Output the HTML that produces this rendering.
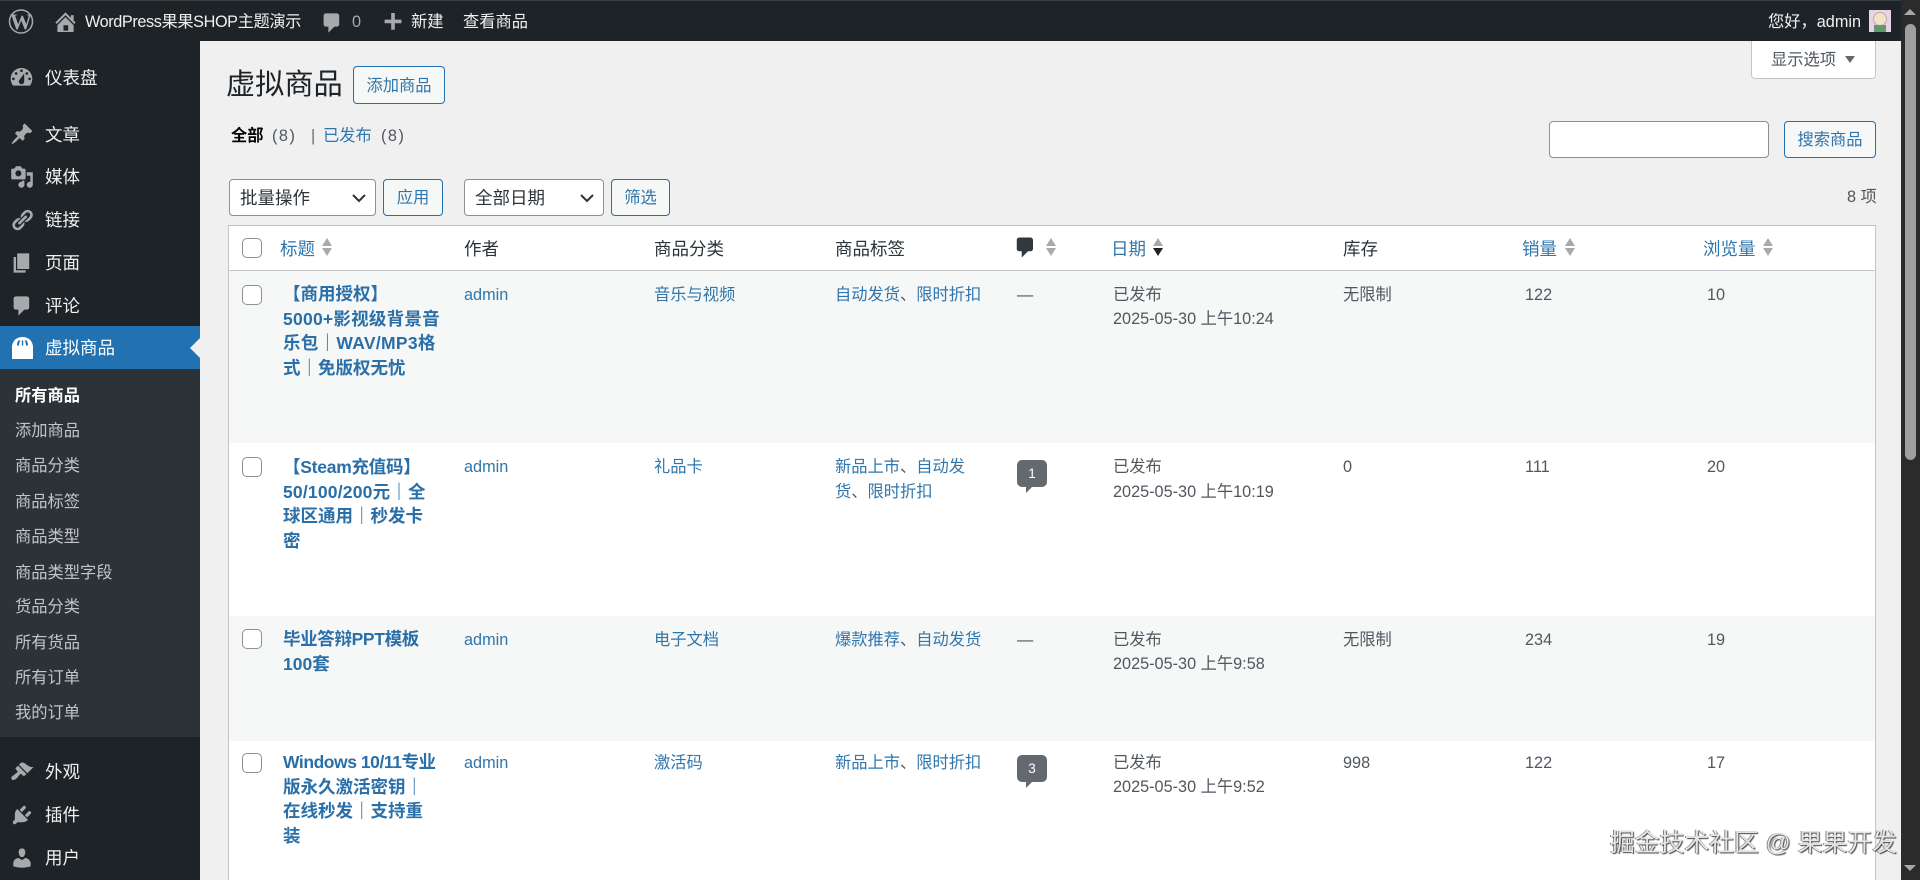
<!DOCTYPE html>
<html lang="zh-CN">
<head>
<meta charset="utf-8">
<title>虚拟商品</title>
<style>
*{box-sizing:border-box;margin:0;padding:0}
html,body{width:1920px;height:880px;overflow:hidden;background:#f0f0f1}
body{position:relative;font-family:"Liberation Sans","Noto Sans CJK SC",sans-serif;font-size:16.25px;color:#50575e}
.a,.t{position:absolute}
.t{white-space:nowrap;line-height:24px;height:24px}
a{color:#2f76ac;text-decoration:none}
.ic{position:absolute;fill:#a7aaad}
#bar{left:0;top:0;width:1901px;height:41px;background:#1d2327;border-top:1px solid #3a3d40}
#side{left:0;top:41px;width:200px;height:839px;background:#1d2327}
#sub{left:0;top:369px;width:200px;height:368px;background:#2c3338}
#cur{left:0;top:326px;width:200px;height:43px;background:#2271b1}
#arrow{left:190px;top:338px;width:0;height:0;border:10px solid transparent;border-right-color:#f0f0f1;border-left:0}
.bt{color:#f0f0f1}
.m{color:#f0f0f1;font-size:17.5px;left:45px;margin-top:1px}
.s{color:#c3c4c7;font-size:16.25px;left:15px;margin-top:1px}
.btn{position:absolute;border:1px solid #2271b1;border-radius:4px;background:#f6f7f7;color:#2f76ac;text-align:center;font-size:16.25px}
.sel{position:absolute;border:1px solid #8c8f94;border-radius:4px;background:#fff;color:#2c3338;font-size:17.5px;padding-left:10px}
.sel svg{position:absolute;top:12px;right:8px}
#table{left:228px;top:225px;width:1648px;height:655px;background:#fff;border:1px solid #c3c4c7;border-bottom:0}
.row{position:absolute;left:229px;width:1646px}
.alt{background:#f6f7f7}
.cb{position:absolute;left:242px;width:20px;height:20px;border:1px solid #8c8f94;border-radius:5px;background:#fff}
.h{font-size:17.5px;color:#2c3338;margin-top:1px}
.sort{position:absolute;top:238px;width:10px;height:18px}
.sort:before,.sort:after{content:"";position:absolute;left:0;width:0;height:0;border-left:5.5px solid transparent;border-right:5.5px solid transparent}
.sort:before{top:0;border-bottom:8px solid #a7aaad}
.sort:after{top:10px;border-top:8px solid #a7aaad}
.sort.on:after{border-top-color:#1d2327}
.title{position:absolute;left:283px;width:170px;font-weight:700;font-size:17.5px;line-height:24.5px;color:#2a6fa8;white-space:nowrap}
.title span{display:block}
.bub{position:absolute;left:1017px;width:30px;height:27px;background:#646970;border-radius:5px;color:#fff;font-size:13.5px;line-height:27px;text-align:center}
.bub:after{content:"";position:absolute;left:9px;top:27px;border-top:6px solid #646970;border-right:6px solid transparent}
</style>
</head>
<body>
<div class="a" id="bar"></div>
<svg class="ic" style="left:8px;top:9px" width="26" height="25" viewBox="0 0 26 25"><circle cx="13" cy="12.500" r="11.500" fill="none" stroke="#a7aaad" stroke-width="1.500"/></svg>
<div class="t" style="left:8px;top:9px;width:26px;text-align:center;font:700 22px/25px 'Liberation Serif',serif;height:25px;color:#a7aaad">W</div>
<svg class="ic" style="left:52px;top:9px" width="27" height="27" viewBox="0 0 20 20"><path fill-rule="evenodd" d="M16 8.500l1.530 1.530-1.060 1.060L10 4.620l-6.470 6.470-1.060-1.060L10 2.500l4 4v-2h2v4zm-6-2.460l6 5.990V17H4v-4.970zM12 16v-4H8.500v4H12z"/></svg>
<div class="t bt" style="left:85px;top:10px;letter-spacing:-.4px">WordPress果果SHOP主题演示</div>
<svg class="ic" style="left:320px;top:11px" width="24" height="24" viewBox="0 0 20 20"><path d="M5 2h9c1.100 0 2 .9 2 2v7c0 1.100-.9 2-2 2h-2l-5 5v-5H5c-1.100 0-2-.9-2-2V4c0-1.100.9-2 2-2z"/></svg>
<div class="t" style="left:352px;top:10px;color:#a7aaad">0</div>
<svg class="ic" style="left:381px;top:10px" width="24" height="24" viewBox="0 0 20 20"><path d="M17 8v3h-5.500v5.500h-3V11H3V8h5.500V2.500h3V8z"/></svg>
<div class="t bt" style="left:411px;top:10px">新建</div>
<div class="t bt" style="left:463px;top:10px">查看商品</div>
<div class="t bt" style="left:1768px;top:10px">您好，admin</div>
<div class="a" style="left:1869px;top:10px;width:22px;height:22px;background:#e8d3e6;overflow:hidden"><div class="a" style="left:4px;top:2px;width:14px;height:14px;border-radius:50%;background:#f0e4c8;border:1px solid #c9a8a8"></div><div class="a" style="left:5px;top:15px;width:12px;height:7px;background:#5f9a6a"></div></div>

<div class="a" style="left:1901px;top:0;width:19px;height:880px;background:#2b2b2b"></div>
<div class="a" style="left:1905px;top:24px;width:11px;height:436px;background:#9f9f9f;border-radius:6px"></div>
<div class="a" style="left:1904px;top:9px;border-left:6px solid transparent;border-right:6px solid transparent;border-bottom:6px solid #a8a8a8"></div>
<div class="a" style="left:1904px;top:865px;border-left:6px solid transparent;border-right:6px solid transparent;border-top:6px solid #a8a8a8"></div>

<div class="a" id="side"></div>
<div class="a" id="cur"></div>
<div class="a" id="sub"></div>
<div class="a" id="arrow"></div>
<svg class="ic" style="left:8px;top:64px" width="27" height="27" viewBox="0 0 20 20"><path fill-rule="evenodd" d="M3.760 16h12.480c1.100-1.370 1.760-3.110 1.760-5 0-4.420-3.580-8-8-8s-8 3.580-8 8c0 1.890.66 3.630 1.760 5zM10 4c.55 0 1 .45 1 1s-.45 1-1 1-1-.45-1-1 .45-1 1-1zM6 6c.55 0 1 .45 1 1s-.45 1-1 1-1-.45-1-1 .45-1 1-1zm8 0c.55 0 1 .45 1 1s-.45 1-1 1-1-.45-1-1 .45-1 1-1zm-5.370 5.550L12 7v6c0 1.100-.9 2-2 2s-2-.9-2-2c0-.57.24-1.080.63-1.450zM4 10c.55 0 1 .45 1 1s-.45 1-1 1-1-.45-1-1 .45-1 1-1zm12 0c.55 0 1 .45 1 1s-.45 1-1 1-1-.45-1-1 .45-1 1-1z"/></svg>
<svg class="ic" style="left:10px;top:122px" width="24" height="24" viewBox="0 0 20 20"><path d="M10.440 3.020l1.820-1.820 6.360 6.350-1.830 1.820c-1.050-.68-2.480-.57-3.410.36l-.75.75c-.92.93-1.040 2.350-.35 3.410l-1.830 1.820-2.410-2.410-2.800 2.790c-.42.42-3.380 2.710-3.800 2.290s1.860-3.390 2.280-3.810l2.790-2.790L4.100 9.360l1.830-1.820c1.050.69 2.480.57 3.400-.36l.75-.75c.93-.92 1.050-2.350.36-3.410z"/></svg>
<svg class="ic" style="left:10px;top:165px" width="24" height="24" viewBox="0 0 20 20"><path fill-rule="evenodd" d="M13 11V4c0-.55-.45-1-1-1h-1.670L9 1H5L3.670 3H2c-.55 0-1 .45-1 1v7c0 .55.45 1 1 1h10c.55 0 1-.45 1-1zM7 4.500c1.380 0 2.500 1.120 2.500 2.500S8.380 9.500 7 9.500 4.500 8.380 4.500 7 5.620 4.500 7 4.500zM14 6h5v10.500c0 1.380-1.120 2.500-2.500 2.500S14 17.880 14 16.500s1.120-2.500 2.500-2.500c.17 0 .34.02.5.05V9h-3V6zm-4 8.050V13h2v3.500c0 1.380-1.120 2.500-2.500 2.500S7 17.880 7 16.500 8.120 14 9.500 14c.17 0 .34.02.5.05z"/></svg>
<svg class="ic" style="left:10px;top:208px" width="24" height="24" viewBox="0 0 20 20"><path d="M17.740 2.760c1.680 1.690 1.680 4.410 0 6.100l-1.530 1.520c-1.120 1.120-2.700 1.490-4.140 1.110l2.620-2.610.76-.77.76-.76c.84-.84.84-2.200 0-3.040-.84-.85-2.200-.85-3.040 0l-.77.76-3.380 3.380c-.37-1.440-.01-3.020 1.110-4.140l1.520-1.530c1.690-1.680 4.420-1.680 6.090 0zM8.590 13.430l5.340-5.340c.42-.42.42-1.100 0-1.520-.44-.43-1.130-.39-1.530 0l-5.330 5.340c-.42.42-.42 1.100 0 1.520.44.43 1.130.39 1.520 0zm-.76 2.290l4.140-4.150c.38 1.440.01 3.020-1.110 4.140l-1.520 1.530c-1.690 1.680-4.410 1.680-6.100 0-1.680-1.680-1.680-4.420 0-6.100l1.530-1.520c1.120-1.120 2.700-1.480 4.140-1.110l-4.140 4.150c-.85.84-.85 2.200 0 3.050.84.84 2.200.84 3.060-.01z"/></svg>
<svg class="ic" style="left:10px;top:251px" width="24" height="24" viewBox="0 0 20 20"><path d="M6 15V2h10v13H6zm-1 1h8v2H3V5h2v11z"/></svg>
<svg class="ic" style="left:10px;top:294px" width="24" height="24" viewBox="0 0 20 20"><path d="M5 2h9c1.100 0 2 .9 2 2v7c0 1.100-.9 2-2 2h-2l-5 5v-5H5c-1.100 0-2-.9-2-2V4c0-1.100.9-2 2-2z"/></svg>
<svg class="ic" style="left:12px;top:337px;fill:#fff" width="21" height="22" viewBox="0 0 21 22"><path fill-rule="evenodd" d="M0 9C1 3 5 0 10.500 0S20 3 21 9v13H0zM6.500 3.500C5.500 4.500 5 6 5 8.500h2C7 6.500 7.500 5 8.500 3.500zM14.500 3.500c1 1 1.500 2.500 1.500 5h-2c0-2-.5-3.500-1.500-5zM9.800 3.500h1.400v5H9.800z"/></svg>
<svg class="ic" style="left:10px;top:760px" width="24" height="24" viewBox="0 0 20 20"><path d="M14.480 11.060L7.410 3.990l1.500-1.500c.5-.56 2.300-.47 3.510.32 1.210.8 1.430 1.280 2.910 2.100 1.180.64 2.450 1.260 4.450.85zm-.71.71L6.700 4.700 4.930 6.470c-.39.39-.39 1.020 0 1.410l1.060 1.060c.39.39.39 1.030 0 1.420-.6.6-1.430 1.110-2.210 1.690-.35.26-.7.53-1.010.84C1.430 13.230.5 15.300 1.560 16.360c.85.85 2.920 0 4.230-1.210.31-.31.58-.66.84-1.010.58-.78 1.090-1.610 1.690-2.210.39-.39 1.030-.39 1.420 0l1.060 1.060c.39.39 1.020.39 1.410 0z"/></svg>
<svg class="ic" style="left:10px;top:803px" width="24" height="24" viewBox="0 0 20 20"><path d="M13.110 4.360L9.870 7.600 8 5.730l3.240-3.240c.35-.34 1.050-.2 1.560.32.52.51.66 1.210.31 1.550zm-8 1.770l.91-1.120 9.010 9.010-1.190.84c-.71.71-2.630 1.160-3.820 1.160H6.140L4.900 17.260c-.59.59-1.540.59-2.120 0-.59-.58-.59-1.530 0-2.120l1.240-1.240v-3.880c0-1.130.4-3.190 1.090-3.890zm7.260 3.970l3.240-3.240c.34-.35 1.040-.21 1.550.31.52.51.66 1.210.31 1.550l-3.240 3.250z"/></svg>
<svg class="ic" style="left:10px;top:846px" width="24" height="24" viewBox="0 0 20 20"><path d="M10 9.250c-2.270 0-2.730-3.440-2.730-3.440C7 4.020 7.820 2 9.970 2c2.160 0 2.980 2.020 2.710 3.810 0 0-.41 3.440-2.680 3.440zm0 2.570L12.720 10c2.390 0 4.520 2.330 4.520 4.530v2.490s-3.650 1.130-7.240 1.130c-3.650 0-7.240-1.130-7.240-1.130v-2.490c0-2.250 1.940-4.480 4.470-4.480z"/></svg>

<div class="t m" style="top:65px">仪表盘</div>
<div class="t m" style="top:122px">文章</div>
<div class="t m" style="top:164px">媒体</div>
<div class="t m" style="top:207px">链接</div>
<div class="t m" style="top:250px">页面</div>
<div class="t m" style="top:293px">评论</div>
<div class="t m" style="top:336px;color:#fff;margin-top:0">虚拟商品</div>
<div class="t s" style="top:383px;color:#fff;font-weight:700">所有商品</div>
<div class="t s" style="top:418px">添加商品</div>
<div class="t s" style="top:453px">商品分类</div>
<div class="t s" style="top:489px">商品标签</div>
<div class="t s" style="top:524px">商品类型</div>
<div class="t s" style="top:560px">商品类型字段</div>
<div class="t s" style="top:594px">货品分类</div>
<div class="t s" style="top:630px">所有货品</div>
<div class="t s" style="top:665px">所有订单</div>
<div class="t s" style="top:700px">我的订单</div>
<div class="t m" style="top:759px">外观</div>
<div class="t m" style="top:802px">插件</div>
<div class="t m" style="top:845px">用户</div>

<div class="a" style="left:1751px;top:41px;width:125px;height:38px;background:#fff;border:1px solid #c3c4c7;border-top:0;border-radius:0 0 4px 4px"></div>
<div class="t" style="left:1771px;top:48px">显示选项</div>
<div class="a" style="left:1845px;top:56px;border-left:5px solid transparent;border-right:5px solid transparent;border-top:7px solid #646970"></div>

<div class="t" style="left:226px;top:67px;height:36px;font-size:29.200px;line-height:36px;color:#1d2327">虚拟商品</div>
<div class="btn" style="left:353px;top:66px;width:92px;height:38px;line-height:38px">添加商品</div>
<div class="t" style="left:231px;top:124px;color:#000;font-weight:700">全部</div>
<div class="t" style="left:272px;top:124px;letter-spacing:1.500px">(8)</div>
<div class="t" style="left:311px;top:124px;color:#646970">|</div>
<div class="t" style="left:323px;top:124px"><a href="#">已发布</a></div>
<div class="t" style="left:381px;top:124px;letter-spacing:1.500px">(8)</div>

<div class="a" style="left:1549px;top:121px;width:220px;height:37px;background:#fff;border:1px solid #8c8f94;border-radius:4px"></div>
<div class="btn" style="left:1784px;top:121px;width:92px;height:37px;line-height:37px">搜索商品</div>

<div class="sel" style="left:229px;top:179px;width:147px;height:37px;line-height:37px">批量操作<svg width="16" height="12" viewBox="0 0 16 12"><path d="M2 3l6 6 6-6" fill="none" stroke="#2c3338" stroke-width="2"/></svg></div>
<div class="btn" style="left:383px;top:179px;width:60px;height:37px;line-height:37px">应用</div>
<div class="sel" style="left:464px;top:179px;width:140px;height:37px;line-height:37px">全部日期<svg width="16" height="12" viewBox="0 0 16 12"><path d="M2 3l6 6 6-6" fill="none" stroke="#2c3338" stroke-width="2"/></svg></div>
<div class="btn" style="left:611px;top:179px;width:59px;height:37px;line-height:37px">筛选</div>
<div class="t" style="left:1847px;top:185px">8 项</div>

<div class="a" id="table"></div>
<div class="a" style="left:229px;top:270px;width:1646px;height:1px;background:#c3c4c7"></div>
<div class="row alt" style="top:271px;height:172px"></div>
<div class="row alt" style="top:616px;height:125px"></div>

<div class="cb" style="top:238px"></div>
<div class="t h" style="left:280px;top:236px"><a href="#">标题</a></div><div class="sort" style="left:322px"></div>
<div class="t h" style="left:464px;top:236px">作者</div>
<div class="t h" style="left:654px;top:236px">商品分类</div>
<div class="t h" style="left:835px;top:236px">商品标签</div>
<svg class="ic" style="left:1013px;top:235px;fill:#32383d" width="25" height="25" viewBox="0 0 20 20"><path d="M5 2h9c1.100 0 2 .9 2 2v7c0 1.100-.9 2-2 2h-2l-5 5v-5H5c-1.100 0-2-.9-2-2V4c0-1.100.9-2 2-2z"/></svg>
<div class="sort" style="left:1046px"></div>
<div class="t h" style="left:1111px;top:236px"><a href="#">日期</a></div><div class="sort on" style="left:1153px"></div>
<div class="t h" style="left:1343px;top:236px">库存</div>
<div class="t h" style="left:1522px;top:236px"><a href="#">销量</a></div><div class="sort" style="left:1565px"></div>
<div class="t h" style="left:1703px;top:236px"><a href="#">浏览量</a></div><div class="sort" style="left:1763px"></div>

<!-- row 1 -->
<div class="cb" style="top:285px"></div>
<div class="title" style="top:282px"><span>【商用授权】</span><span style="letter-spacing:.25px">5000+影视级背景音</span><span style="letter-spacing:.3px">乐包｜WAV/MP3格</span><span>式｜免版权无忧</span></div>
<div class="t" style="left:464px;top:283px"><a href="#">admin</a></div>
<div class="t" style="left:654px;top:283px"><a href="#">音乐与视频</a></div>
<div class="t" style="left:835px;top:283px"><a href="#">自动发货</a>、<a href="#">限时折扣</a></div>
<div class="t" style="left:1017px;top:283px">—</div>
<div class="t" style="left:1113px;top:283px">已发布</div>
<div class="t" style="left:1113px;top:307px">2025-05-30 上午10:24</div>
<div class="t" style="left:1343px;top:283px">无限制</div>
<div class="t" style="left:1525px;top:283px">122</div>
<div class="t" style="left:1707px;top:283px">10</div>

<!-- row 2 -->
<div class="cb" style="top:457px"></div>
<div class="title" style="top:455px"><span style="letter-spacing:-.25px">【Steam充值码】</span><span style="letter-spacing:.2px">50/100/200元｜全</span><span>球区通用｜秒发卡</span><span>密</span></div>
<div class="t" style="left:464px;top:455px"><a href="#">admin</a></div>
<div class="t" style="left:654px;top:455px"><a href="#">礼品卡</a></div>
<div class="t" style="left:835px;top:455px"><a href="#">新品上市</a>、<a href="#">自动发</a></div>
<div class="t" style="left:835px;top:480px"><a href="#">货</a>、<a href="#">限时折扣</a></div>
<div class="bub" style="top:460px">1</div>
<div class="t" style="left:1113px;top:455px">已发布</div>
<div class="t" style="left:1113px;top:480px">2025-05-30 上午10:19</div>
<div class="t" style="left:1343px;top:455px">0</div>
<div class="t" style="left:1525px;top:455px">111</div>
<div class="t" style="left:1707px;top:455px">20</div>

<!-- row 3 -->
<div class="cb" style="top:629px"></div>
<div class="title" style="top:627px"><span style="letter-spacing:-.35px">毕业答辩PPT模板</span><span>100套</span></div>
<div class="t" style="left:464px;top:628px"><a href="#">admin</a></div>
<div class="t" style="left:654px;top:628px"><a href="#">电子文档</a></div>
<div class="t" style="left:835px;top:628px"><a href="#">爆款推荐</a>、<a href="#">自动发货</a></div>
<div class="t" style="left:1017px;top:628px">—</div>
<div class="t" style="left:1113px;top:628px">已发布</div>
<div class="t" style="left:1113px;top:652px">2025-05-30 上午9:58</div>
<div class="t" style="left:1343px;top:628px">无限制</div>
<div class="t" style="left:1525px;top:628px">234</div>
<div class="t" style="left:1707px;top:628px">19</div>

<!-- row 4 -->
<div class="cb" style="top:753px"></div>
<div class="title" style="top:750px"><span style="letter-spacing:-.45px">Windows 10/11专业</span><span>版永久激活密钥｜</span><span>在线秒发｜支持重</span><span>装</span></div>
<div class="t" style="left:464px;top:751px"><a href="#">admin</a></div>
<div class="t" style="left:654px;top:751px"><a href="#">激活码</a></div>
<div class="t" style="left:835px;top:751px"><a href="#">新品上市</a>、<a href="#">限时折扣</a></div>
<div class="bub" style="top:755px">3</div>
<div class="t" style="left:1113px;top:751px">已发布</div>
<div class="t" style="left:1113px;top:775px">2025-05-30 上午9:52</div>
<div class="t" style="left:1343px;top:751px">998</div>
<div class="t" style="left:1525px;top:751px">122</div>
<div class="t" style="left:1707px;top:751px">17</div>

<div class="t" style="left:1610px;top:824px;height:36px;line-height:36px;margin-top:2px;font-size:24.800px;color:#e4e4e4;text-shadow:1px 1px 1px #444,-1px 0 0 #888">掘金技术社区 @ 果果开发</div>
</body>
</html>
